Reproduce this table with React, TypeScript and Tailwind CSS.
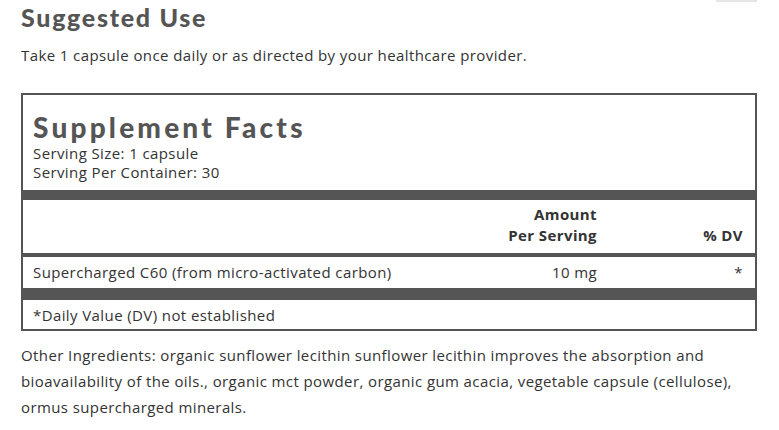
import React from "react";

export default function App() {
  const body = { fontFamily: '"Open Sans", "Noto Sans", sans-serif' };
  const head = { fontFamily: 'Lato, "Noto Sans", sans-serif' };
  return (
    <div className="relative w-[779px] h-[430px] bg-white overflow-hidden tracking-[0.4px]" style={body}>
      <div className="absolute left-[716px] top-0 w-[41px] h-[2px] bg-[#e6e6e6]" />
      <div className="pl-[21px] pr-[22px]">
        <h2 className="pt-[1px] text-[25px] leading-[32px] font-black text-[#555555] tracking-[1.7px]" style={head}>
          Suggested Use
        </h2>
        <p className="mt-[12px] text-[15px] leading-[20px] text-[#333333]">
          Take 1 capsule once daily or as directed by your healthcare provider.
        </p>
        <div className="mt-[28px] border-2 border-[#555555] text-[#333333]">
          <div className="px-[10px] pt-[15px] pb-[8px]">
            <div className="text-[28px] leading-[34px] font-black text-[#555555] tracking-[3.2px]" style={head}>
              Supplement Facts
            </div>
            <div className="text-[15px] leading-[19px]">Serving Size: 1 capsule</div>
            <div className="text-[15px] leading-[19px]">Serving Per Container: 30</div>
          </div>
          <div className="h-[10px] bg-[#555555]" />
          <div className="flex items-end px-[10px] pr-[12px] pt-[4px] pb-[7px] text-[15px] leading-[21px] font-bold">
            <div className="flex-1" />
            <div className="w-[200px] text-right">
              Amount
              <br />
              Per Serving
            </div>
            <div className="w-[146px] text-right">% DV</div>
          </div>
          <div className="h-[4px] bg-[#555555]" />
          <div className="flex items-center px-[10px] pr-[12px] pt-[5px] pb-[6px] text-[15px] leading-[20px]">
            <div className="flex-1">Supercharged C60 (from micro-activated carbon)</div>
            <div className="w-[200px] text-right">10 mg</div>
            <div className="w-[146px] text-right">*</div>
          </div>
          <div className="h-[12px] bg-[#555555]" />
          <div className="px-[10px] pt-[5px] pb-[4px] text-[15px] leading-[20px]">
            *Daily Value (DV) not established
          </div>
        </div>
        <p className="mt-[11px] text-[15px] leading-[26px] text-[#333333]">
          Other Ingredients: organic sunflower lecithin sunflower lecithin improves the absorption and bioavailability of
          the oils., organic mct powder, organic gum acacia, vegetable capsule (cellulose), ormus supercharged minerals.
        </p>
      </div>
    </div>
  );
}
